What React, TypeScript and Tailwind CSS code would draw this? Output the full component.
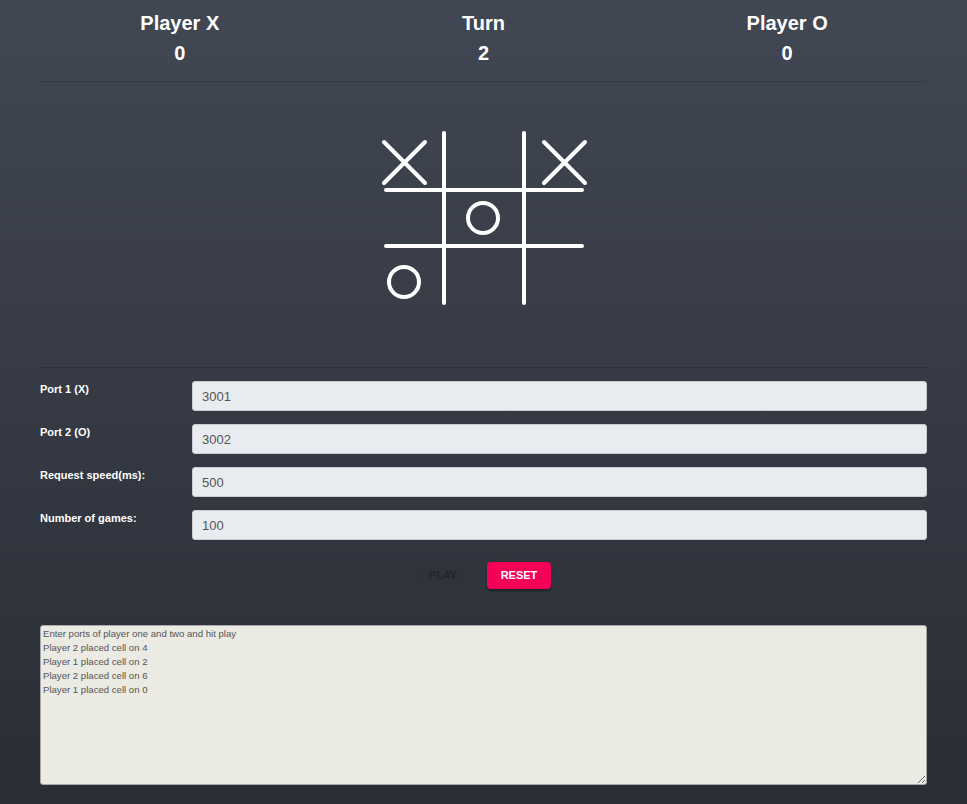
const fields = [
  { label: "Port 1 (X)", value: "3001" },
  { label: "Port 2 (O)", value: "3002" },
  { label: "Request speed(ms):", value: "500" },
  { label: "Number of games:", value: "100" },
];

const log = [
  "Enter ports of player one and two and hit play",
  "Player 2 placed cell on 4",
  "Player 1 placed cell on 2",
  "Player 2 placed cell on 6",
  "Player 1 placed cell on 0",
].join("\n");

const Board = () => (
  <svg width="210" height="176" viewBox="0 0 210 176" fill="none" stroke="white" strokeWidth="4" strokeLinecap="round">
    {/* grid */}
    <line x1="65" y1="3" x2="65" y2="173" />
    <line x1="145" y1="3" x2="145" y2="173" />
    <line x1="7" y1="60" x2="203" y2="60" />
    <line x1="7" y1="116" x2="203" y2="116" />
    {/* marks */}
    <line x1="5" y1="12" x2="46" y2="53" />
    <line x1="46" y1="12" x2="5" y2="53" />
    <line x1="165" y1="12" x2="206" y2="53" />
    <line x1="206" y1="12" x2="165" y2="53" />
    <circle cx="104" cy="88" r="15" />
    <circle cx="25" cy="152" r="15" />
  </svg>
);

const App = () => {
  return (
    <div className="min-h-screen bg-gradient-to-b from-[#414753] to-[#2a2d35] px-10 font-['Liberation_Sans',Arial,sans-serif]">
      <header className="-mx-3 grid grid-cols-3 pt-[9px] pb-[14px] text-center text-[20px] font-bold text-white">
        <div>
          <div className="leading-[28px]">Player X</div>
          <div className="mt-[2px] leading-[28px]">0</div>
        </div>
        <div>
          <div className="leading-[28px]">Turn</div>
          <div className="mt-[2px] leading-[28px]">2</div>
        </div>
        <div>
          <div className="leading-[28px]">Player O</div>
          <div className="mt-[2px] leading-[28px]">0</div>
        </div>
      </header>
      <div className="h-px bg-[#363a44]" />

      <div className="flex justify-center pt-[48px] pb-[61px]">
        <Board />
      </div>
      <div className="h-px bg-[#2c2f37]" />

      <div className="flex flex-col gap-[13px] pt-[13px]">
        {fields.map((f) => (
          <div key={f.label} className="flex items-start">
            <label className="w-[152px] pt-[1px] text-[11px] font-bold leading-[14px] text-white">
              {f.label}
            </label>
            <input
              defaultValue={f.value}
              className="h-[30px] flex-1 rounded-[3px] border border-[#c9ccd1] bg-[#e8ebef] px-[9px] text-[13px] text-[#555] outline-none"
            />
          </div>
        ))}
      </div>

      <div className="flex justify-center gap-[17px] pt-[22px]">
        <button
          disabled
          className="h-[27px] w-[54px] rounded-[4px] bg-[#2f333b] text-[11px] font-bold text-[#23262c]"
        >
          PLAY
        </button>
        <button className="h-[27px] w-[64px] rounded-[4px] bg-[#f50057] text-[11px] font-bold text-white shadow-[0_2px_3px_rgba(0,0,0,0.35)]">
          RESET
        </button>
      </div>

      <div className="pt-[36px] pb-[18px]">
        <textarea
          readOnly
          defaultValue={log}
          className="block h-[160px] w-full rounded-[3px] border border-[#a9a9a9] bg-[#ebeae3] px-[2px] py-[1px] text-[9.6px] leading-[14px] text-[#555] outline-none"
        />
      </div>
    </div>
  );
};

export default App;
